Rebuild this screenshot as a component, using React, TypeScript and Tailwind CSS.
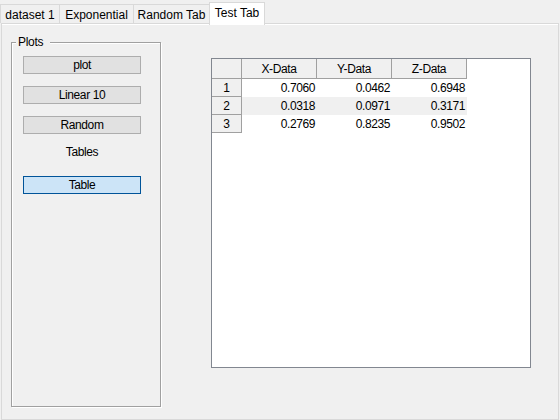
import React from 'react'

const tabs = [
  { label: 'dataset 1', width: 'w-[59px]' },
  { label: 'Exponential', width: 'w-[74px]' },
  { label: 'Random Tab', width: 'w-[76px]' },
]

const rows = [
  ['0.7060', '0.0462', '0.6948'],
  ['0.0318', '0.0971', '0.3171'],
  ['0.2769', '0.8235', '0.9502'],
]

function Button({ label, focused = false, className = '' }: { label: string; focused?: boolean; className?: string }) {
  return (
    <button
      className={
        'flex h-[18px] w-[118px] items-center justify-center border text-[12px] tracking-[-0.4px] text-black ' +
        (focused ? 'border-[#005499] bg-[#cce4f7] ' : 'border-[#adadad] bg-[#e1e1e1] ') +
        className
      }
    >
      {label}
    </button>
  )
}

export default function App() {
  return (
    <div
      className="h-[420px] w-[560px] overflow-hidden bg-[#f0f0f0] text-black"
      style={{ fontFamily: '"Liberation Sans", Arial, sans-serif' }}
    >
      {/* tab strip */}
      <div className="flex h-[23px] items-end">
        {tabs.map((t) => (
          <div
            key={t.label}
            className={`flex h-[19px] ${t.width} items-center justify-center border-l border-t border-[#d9d9d9] bg-[#f0f0f0] pt-px text-[12px]`}
          >
            {t.label}
          </div>
        ))}
        <div className="relative z-10 -mb-[2px] flex h-[23px] w-[56px] items-center justify-center border-x border-t border-[#d9d9d9] bg-white pb-[2px] text-[12px]">
          Test Tab
        </div>
      </div>

      {/* panel */}
      <div className="ml-px h-[397px] w-[558px] border border-[#d9d9d9] bg-[#f0f0f0] shadow-[inset_0_1px_0_#fff]">
        <div className="flex">
          {/* group box */}
          <div className="relative ml-[9px] mt-[18px] h-[365px] w-[150px] border border-[#a0a0a0] shadow-[inset_1px_1px_0_#fff,1px_1px_0_#fff]">
            <span className="absolute -top-[8px] left-[4px] bg-[#f0f0f0] pl-[2px] pr-[7px] text-[12px] leading-[14px] tracking-[-0.3px]">
              Plots
            </span>
            <div className="flex flex-col pl-[11px] pt-[13px]">
              <Button label="plot" />
              <Button label="Linear 10" className="mt-[12px]" />
              <Button label="Random" className="mt-[12px]" />
              <div className="mt-[11px] w-[118px] text-center text-[12px] leading-[14px] tracking-[-0.4px]">Tables</div>
              <Button label="Table" focused className="mt-[17px]" />
            </div>
          </div>

          {/* table */}
          <div className="ml-[50px] mt-[34px] h-[310px] w-[320px] border border-[#828790] bg-white">
            <div className="grid grid-cols-[30px_75px_75px_75px] text-[12px] tracking-[-0.4px]">
              <div className="h-[20px] border-b border-r border-[#a0a0a0] bg-[#f0f0f0]" />
              {['X-Data', 'Y-Data', 'Z-Data'].map((h) => (
                <div
                  key={h}
                  className="flex h-[20px] items-center justify-center border-b border-r border-[#a0a0a0] bg-[#f0f0f0]"
                >
                  {h}
                </div>
              ))}
              {rows.map((r, i) => (
                <React.Fragment key={i}>
                  <div className="flex h-[18px] items-center justify-center border-b border-r border-[#a0a0a0] bg-[#f0f0f0]">
                    {i + 1}
                  </div>
                  {r.map((v, j) => (
                    <div
                      key={j}
                      className={
                        'flex h-[18px] items-center justify-end pr-[2px] ' + (i === 1 ? 'bg-[#f0f0f0]' : 'bg-white')
                      }
                    >
                      {v}
                    </div>
                  ))}
                </React.Fragment>
              ))}
            </div>
          </div>
        </div>
      </div>
    </div>
  )
}
